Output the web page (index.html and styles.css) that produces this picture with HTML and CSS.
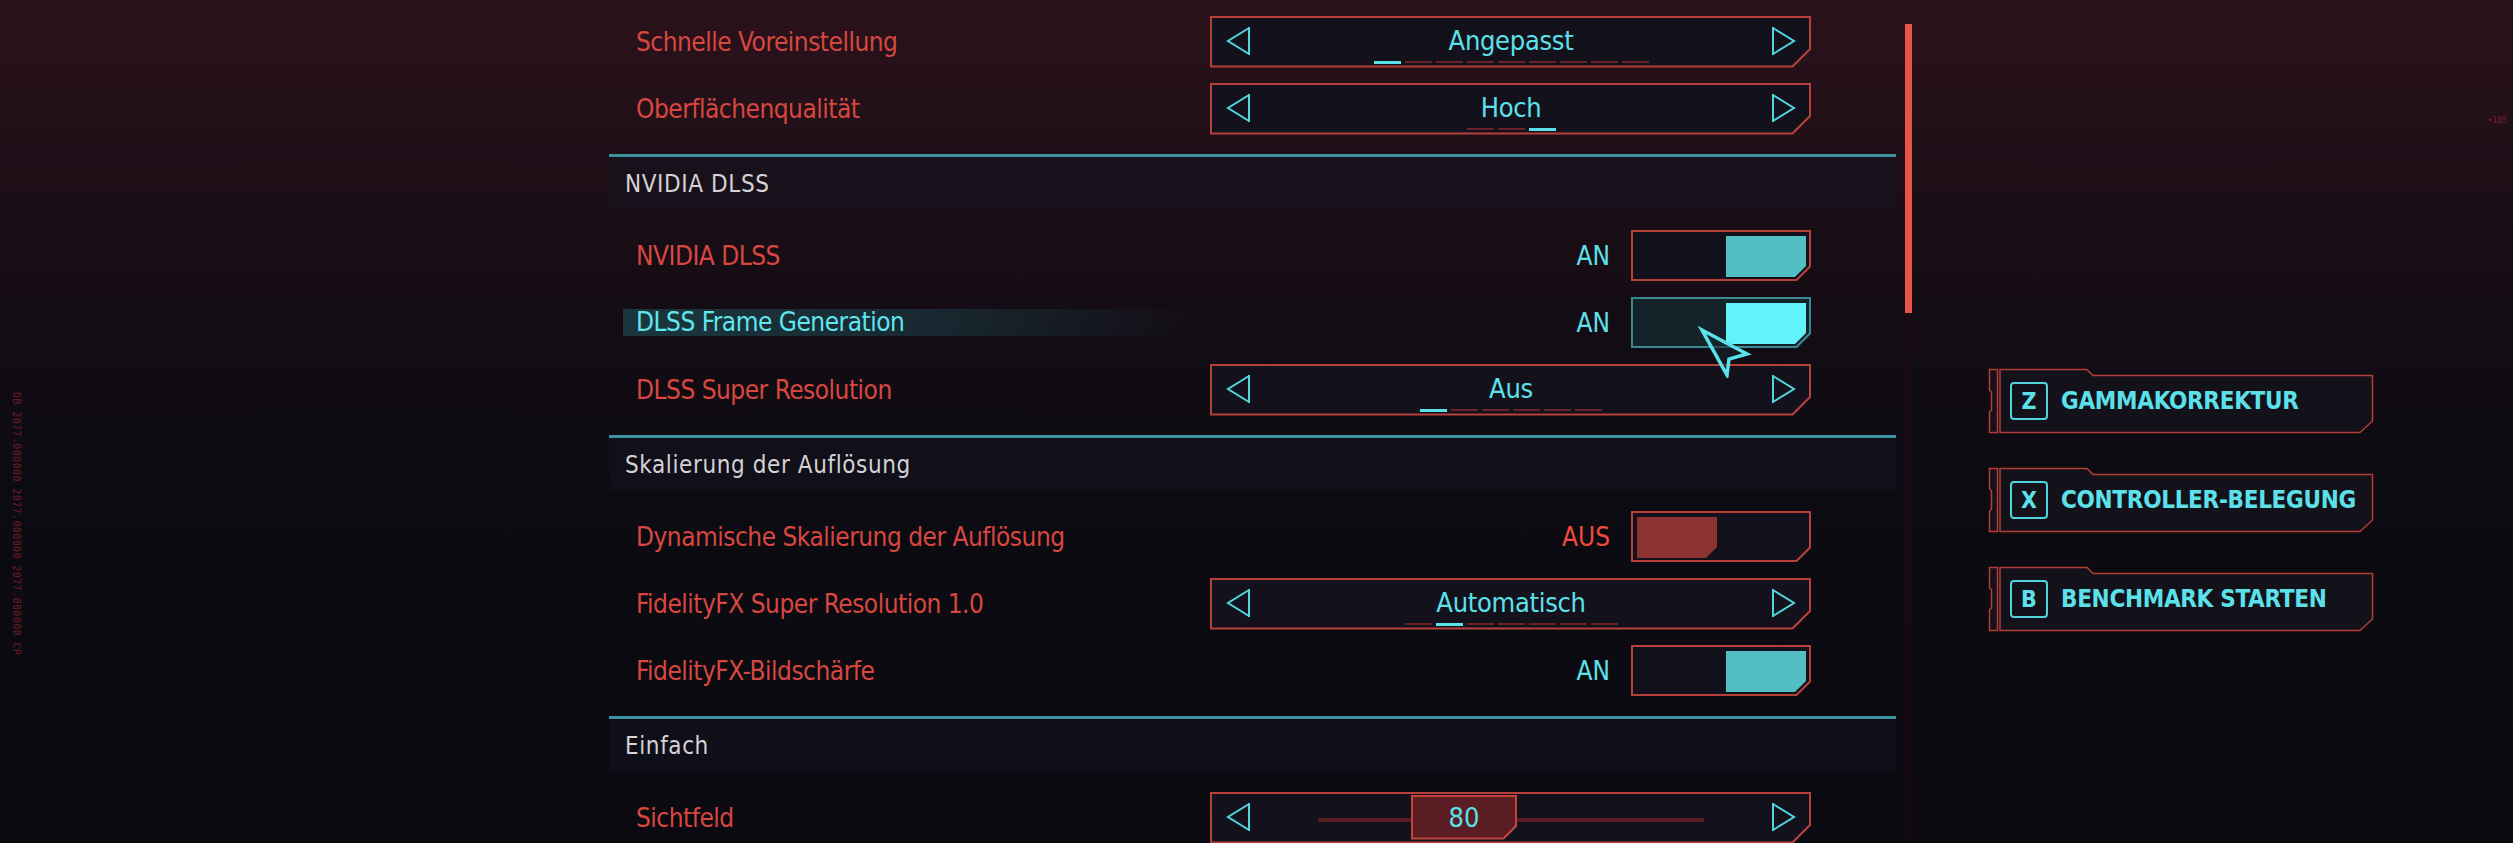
FILE: index.html
```html
<!DOCTYPE html>
<html lang="de">
<head>
<meta charset="utf-8">
<title>Grafik-Einstellungen</title>
<link rel="stylesheet" href="styles.css">
</head>
<body>
<div class="side-code">DB 2077.000000 2077.000000 2077.000000 CP</div>
<div class="corner-code">•105</div>

<div class="screen">
  <main class="settings">
    <section class="section">
      <div class="rows">
        <div class="row">
          <span class="label">Schnelle Voreinstellung</span>
          <div class="frame">
            <div class="frame-inner">
              <svg class="arrow" width="25" height="30" viewBox="0 0 25 30"><path d="M23 1V29M23 2L2 15L23 28" fill="none" stroke="#4fd6df" stroke-width="2"/></svg>
              <div class="value-col">
                <span class="value">Angepasst</span>
                <div class="dashes"><i class="dash on"></i><i class="dash"></i><i class="dash"></i><i class="dash"></i><i class="dash"></i><i class="dash"></i><i class="dash"></i><i class="dash"></i><i class="dash"></i></div>
              </div>
              <svg class="arrow" width="25" height="30" viewBox="0 0 25 30"><path d="M2 1V29M2 2L23 15L2 28" fill="none" stroke="#4fd6df" stroke-width="2"/></svg>
            </div>
          </div>
        </div>
        <div class="row">
          <span class="label">Oberflächenqualität</span>
          <div class="frame">
            <div class="frame-inner">
              <svg class="arrow" width="25" height="30" viewBox="0 0 25 30"><path d="M23 1V29M23 2L2 15L23 28" fill="none" stroke="#4fd6df" stroke-width="2"/></svg>
              <div class="value-col">
                <span class="value">Hoch</span>
                <div class="dashes"><i class="dash"></i><i class="dash"></i><i class="dash on"></i></div>
              </div>
              <svg class="arrow" width="25" height="30" viewBox="0 0 25 30"><path d="M2 1V29M2 2L23 15L2 28" fill="none" stroke="#4fd6df" stroke-width="2"/></svg>
            </div>
          </div>
        </div>
      </div>
    </section>

    <section class="section">
      <div class="divider"></div>
      <div class="section-head">NVIDIA DLSS</div>
      <div class="rows">
        <div class="row">
          <span class="label">NVIDIA DLSS</span>
          <div class="control">
            <span class="state">AN</span>
            <div class="toggle"><div class="toggle-inner"><div class="knob"></div></div></div>
          </div>
        </div>
        <div class="row">
          <span class="label hl">DLSS Frame Generation</span>
          <div class="control">
            <span class="state">AN</span>
            <div class="toggle hover"><div class="toggle-inner"><div class="knob"></div></div></div>
          </div>
        </div>
        <div class="row">
          <span class="label">DLSS Super Resolution</span>
          <div class="frame">
            <div class="frame-inner">
              <svg class="arrow" width="25" height="30" viewBox="0 0 25 30"><path d="M23 1V29M23 2L2 15L23 28" fill="none" stroke="#4fd6df" stroke-width="2"/></svg>
              <div class="value-col">
                <span class="value">Aus</span>
                <div class="dashes"><i class="dash on"></i><i class="dash"></i><i class="dash"></i><i class="dash"></i><i class="dash"></i><i class="dash"></i></div>
              </div>
              <svg class="arrow" width="25" height="30" viewBox="0 0 25 30"><path d="M2 1V29M2 2L23 15L2 28" fill="none" stroke="#4fd6df" stroke-width="2"/></svg>
            </div>
          </div>
        </div>
      </div>
    </section>

    <section class="section">
      <div class="divider"></div>
      <div class="section-head">Skalierung der Auflösung</div>
      <div class="rows">
        <div class="row">
          <span class="label">Dynamische Skalierung der Auflösung</span>
          <div class="control">
            <span class="state off">AUS</span>
            <div class="toggle off"><div class="toggle-inner"><div class="knob"></div></div></div>
          </div>
        </div>
        <div class="row">
          <span class="label">FidelityFX Super Resolution 1.0</span>
          <div class="frame">
            <div class="frame-inner">
              <svg class="arrow" width="25" height="30" viewBox="0 0 25 30"><path d="M23 1V29M23 2L2 15L23 28" fill="none" stroke="#4fd6df" stroke-width="2"/></svg>
              <div class="value-col">
                <span class="value">Automatisch</span>
                <div class="dashes"><i class="dash"></i><i class="dash on"></i><i class="dash"></i><i class="dash"></i><i class="dash"></i><i class="dash"></i><i class="dash"></i></div>
              </div>
              <svg class="arrow" width="25" height="30" viewBox="0 0 25 30"><path d="M2 1V29M2 2L23 15L2 28" fill="none" stroke="#4fd6df" stroke-width="2"/></svg>
            </div>
          </div>
        </div>
        <div class="row">
          <span class="label">FidelityFX-Bildschärfe</span>
          <div class="control">
            <span class="state">AN</span>
            <div class="toggle"><div class="toggle-inner"><div class="knob"></div></div></div>
          </div>
        </div>
      </div>
    </section>

    <section class="section">
      <div class="divider"></div>
      <div class="section-head">Einfach</div>
      <div class="rows">
        <div class="row">
          <span class="label">Sichtfeld</span>
          <div class="frame">
            <div class="frame-inner">
              <svg class="arrow" width="25" height="30" viewBox="0 0 25 30"><path d="M23 1V29M23 2L2 15L23 28" fill="none" stroke="#4fd6df" stroke-width="2"/></svg>
              <div class="track-wrap">
                <div class="track">
                  <div class="thumb" style="left: 93px"><div class="thumb-inner">80</div></div>
                </div>
              </div>
              <svg class="arrow" width="25" height="30" viewBox="0 0 25 30"><path d="M2 1V29M2 2L23 15L2 28" fill="none" stroke="#4fd6df" stroke-width="2"/></svg>
            </div>
          </div>
        </div>
      </div>
    </section>
  </main>

  <div class="scrollbar"><div class="scroll-thumb"></div></div>

  <aside class="actions">
    <div class="btn">
      <svg class="btn-frame" width="386" height="66" viewBox="0 0 386 66"><path d="M1.5 1.5H9.5V64.5H1.5V44L3.5 42V24L1.5 22Z" fill="#13121b" stroke="#b53c37" stroke-width="1.5"/><path d="M12 1.5H99L105 7.5H384.5V53L372 64.5H12Z" fill="#13121b" stroke="#b53c37" stroke-width="1.5"/></svg>
      <span class="key">Z</span><span class="btn-text">GAMMAKORREKTUR</span>
    </div>
    <div class="btn">
      <svg class="btn-frame" width="386" height="66" viewBox="0 0 386 66"><path d="M1.5 1.5H9.5V64.5H1.5V44L3.5 42V24L1.5 22Z" fill="#13121b" stroke="#b53c37" stroke-width="1.5"/><path d="M12 1.5H99L105 7.5H384.5V53L372 64.5H12Z" fill="#13121b" stroke="#b53c37" stroke-width="1.5"/></svg>
      <span class="key">X</span><span class="btn-text">CONTROLLER-BELEGUNG</span>
    </div>
    <div class="btn">
      <svg class="btn-frame" width="386" height="66" viewBox="0 0 386 66"><path d="M1.5 1.5H9.5V64.5H1.5V44L3.5 42V24L1.5 22Z" fill="#13121b" stroke="#b53c37" stroke-width="1.5"/><path d="M12 1.5H99L105 7.5H384.5V53L372 64.5H12Z" fill="#13121b" stroke="#b53c37" stroke-width="1.5"/></svg>
      <span class="key">B</span><span class="btn-text">BENCHMARK STARTEN</span>
    </div>
  </aside>
</div>

<svg class="cursor" width="54" height="52" viewBox="0 0 54 52"><path d="M4 4L49 28L31 33L29 49Z" fill="rgba(18,38,46,0.55)" stroke="#5ce1ea" stroke-width="3.5" stroke-linejoin="miter"/></svg>
</body>
</html>
```

FILE: styles.css
```css
* { box-sizing: border-box; }

html, body {
  margin: 0;
  padding: 0;
}

body {
  position: relative;
  width: 2513px;
  height: 843px;
  overflow: hidden;
  background: linear-gradient(180deg, #2b121a 0px, #26111a 70px, #1c0e16 200px, #130c14 330px, #0d0b12 480px, #0a0a10 843px);
  font-family: "DejaVu Sans Condensed", "Liberation Sans Narrow", "Liberation Sans", sans-serif;
}

.screen {
  display: flex;
  align-items: flex-start;
  height: 843px;
  padding-left: 609px;
}

/* ---------- settings list ---------- */
.settings {
  flex: none;
  width: 1287px;
  padding-top: 8px;
}

.rows { padding: 12px 0; }
.section:first-child .rows { padding-top: 0; }

.divider {
  height: 3px;
  background: #3a939f;
}

.section-head {
  height: 53px;
  display: flex;
  align-items: center;
  padding-left: 16px;
  background: rgba(20, 20, 32, 0.55);
  color: #d6d2d4;
  font-size: 24px;
  letter-spacing: 0.6px;
}

.row {
  height: 67px;
  display: flex;
  align-items: center;
  justify-content: space-between;
  padding: 0 85px 0 27px;
}

.label {
  color: #d8473f;
  font-size: 26px;
  letter-spacing: -0.5px;
}

.label.hl {
  color: #5fe6ee;
  margin-left: -13px;
  padding-left: 13px;
  width: 575px;
  height: 27px;
  line-height: 27px;
  background: linear-gradient(90deg, rgba(34, 88, 96, 0.55), rgba(30, 78, 86, 0.42) 55%, rgba(30, 78, 86, 0));
}

.control {
  display: flex;
  align-items: center;
}

.state {
  font-size: 26px;
  color: #5ce1ea;
  margin-right: 21px;
}
.state.off { color: #f04a3f; }

/* ---------- selector frame ---------- */
.frame {
  flex: none;
  width: 601px;
  height: 52px;
  padding: 2px;
  background: #b7413a;
  clip-path: polygon(0 0, 100% 0, 100% calc(100% - 18px), calc(100% - 18px) 100%, 0 100%);
}

.frame-inner {
  height: 100%;
  display: flex;
  align-items: center;
  padding: 0 13px 0 14px;
  background: #13121c;
  clip-path: polygon(0 0, 100% 0, 100% calc(100% - 17px), calc(100% - 17px) 100%, 0 100%);
}

.arrow { flex: none; display: block; margin-top: -2px; }

.value-col {
  flex: 1;
  align-self: stretch;
  display: flex;
  flex-direction: column;
  align-items: center;
  padding-top: 8px;
}

.value {
  font-size: 27px;
  line-height: 30px;
  color: #5ce1ea;
  letter-spacing: -0.3px;
}

.dashes {
  display: flex;
  align-items: center;
  gap: 4px;
  height: 3px;
  margin-top: 5px;
}

.dash {
  display: block;
  width: 27px;
  height: 2px;
  background: #6b2226;
}
.dash.on {
  height: 3px;
  background: #5ce1ea;
}

/* ---------- slider ---------- */
.track-wrap {
  flex: 1;
  display: flex;
  justify-content: center;
  align-items: center;
  margin-top: 4px;
}

.track {
  position: relative;
  width: 386px;
  height: 4px;
  background: #561c21;
}

.thumb {
  position: absolute;
  top: -23px;
  width: 106px;
  height: 45px;
  padding: 2px;
  background: #c2443c;
  clip-path: polygon(0 0, 100% 0, 100% calc(100% - 13px), calc(100% - 13px) 100%, 0 100%);
}

.thumb-inner {
  height: 100%;
  display: flex;
  align-items: center;
  justify-content: center;
  background: #5a1d23;
  color: #5ce1ea;
  font-size: 27px;
  clip-path: polygon(0 0, 100% 0, 100% calc(100% - 12px), calc(100% - 12px) 100%, 0 100%);
}

/* ---------- toggle ---------- */
.toggle {
  width: 180px;
  height: 51px;
  padding: 2px;
  background: #b7413a;
  clip-path: polygon(0 0, 100% 0, 100% calc(100% - 14px), calc(100% - 14px) 100%, 0 100%);
}

.toggle-inner {
  height: 100%;
  display: flex;
  justify-content: flex-end;
  padding: 4px 3px 2px 4px;
  background: #13121c;
  clip-path: polygon(0 0, 100% 0, 100% calc(100% - 13px), calc(100% - 13px) 100%, 0 100%);
}

.knob {
  width: 80px;
  height: 100%;
  background: #52bfc4;
  clip-path: polygon(0 0, 100% 0, 100% calc(100% - 11px), calc(100% - 11px) 100%, 0 100%);
}

.toggle.off .toggle-inner { justify-content: flex-start; }
.toggle.off .knob { background: #8c3230; }

.toggle.hover { background: #3b8891; }
.toggle.hover .toggle-inner { background: #142229; }
.toggle.hover .knob { background: #60f4fa; }

/* ---------- scrollbar ---------- */
.scrollbar {
  flex: none;
  margin-left: 9px;
  margin-top: 24px;
  width: 7px;
  height: 819px;
  background: linear-gradient(180deg, #1f0d14, #110a10);
}

.scroll-thumb {
  height: 289px;
  background: #e8534a;
}

/* ---------- action buttons ---------- */
.actions {
  flex: none;
  margin-left: 76px;
  padding-top: 368px;
  display: flex;
  flex-direction: column;
  gap: 33px;
}

.btn {
  position: relative;
  width: 386px;
  height: 66px;
  display: flex;
  align-items: center;
  padding-left: 22px;
  white-space: nowrap;
}

.btn-frame {
  position: absolute;
  left: 0;
  top: 0;
}

.key {
  position: relative;
  flex: none;
  width: 38px;
  height: 38px;
  margin-right: 13px;
  border: 2px solid #4fd3dd;
  border-radius: 4px;
  display: flex;
  align-items: center;
  justify-content: center;
  color: #5ce1ea;
  font-weight: bold;
  font-size: 23px;
}

.btn-text {
  position: relative;
  color: #5ce1ea;
  font-weight: bold;
  font-size: 24px;
  letter-spacing: -0.3px;
}

/* ---------- decorations ---------- */
.cursor {
  position: absolute;
  left: 1698px;
  top: 326px;
}

.side-code {
  position: absolute;
  left: 11px;
  top: 392px;
  writing-mode: vertical-rl;
  font-family: "DejaVu Sans Mono", monospace;
  font-size: 10px;
  letter-spacing: 0.4px;
  color: #6a1d26;
}

.corner-code {
  position: absolute;
  right: 6px;
  top: 116px;
  font-family: "DejaVu Sans Mono", monospace;
  font-size: 8px;
  color: #7a2430;
}
```
